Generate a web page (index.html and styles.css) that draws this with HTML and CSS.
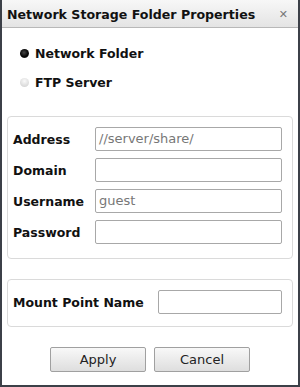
FILE: index.html
```html
<!DOCTYPE html>
<html>
<head>
<meta charset="utf-8">
<link rel="stylesheet" href="styles.css">
</head>
<body>
<div class="dialog">
  <div class="titlebar">
    <span class="title">Network Storage Folder Properties</span>
    <span class="close">&#x2715;</span>
  </div>
  <div class="content">
    <div class="radios">
      <label class="radio"><span class="dot on"></span>Network Folder</label>
      <label class="radio"><span class="dot"></span>FTP Server</label>
    </div>
    <div class="fieldset creds">
      <div class="row"><span class="lbl">Address</span><div class="input ph">//server/share/</div></div>
      <div class="row"><span class="lbl">Domain</span><div class="input"></div></div>
      <div class="row"><span class="lbl">Username</span><div class="input ph">guest</div></div>
      <div class="row"><span class="lbl">Password</span><div class="input"></div></div>
    </div>
    <div class="fieldset mount">
      <div class="row"><span class="lbl wide">Mount Point Name</span><div class="input short"></div></div>
    </div>
    <div class="buttons">
      <button class="btn">Apply</button>
      <button class="btn">Cancel</button>
    </div>
  </div>
</div>
</body>
</html>
```
FILE: styles.css
```css
html, body { margin: 0; padding: 0; background: #fff; }
body { font-family: "DejaVu Sans", Verdana, sans-serif; color: #111; }
.dialog {
  width: 300px; height: 387px; box-sizing: border-box;
  border-left: 2px solid #3c4048; border-right: 2px solid #3c4048; border-bottom: 2px solid #3c4048;
  background: #fff; display: flex; flex-direction: column;
}
.titlebar {
  height: 28px; box-sizing: border-box; display: flex; align-items: center; justify-content: space-between;
  padding: 1px 10px 0 5px;
  background: linear-gradient(#f7f7f7, #e4e4e4);
  border-bottom: 1px solid #b8b8b8;
}
.title { font-weight: bold; font-size: 12.6px; }
.close { font-size: 11px; color: #777; font-weight: bold; }
.content { padding: 0 5px; display: flex; flex-direction: column; }
.radios { display: flex; flex-direction: column; gap: 13px; padding: 17px 0 0 13px; height: 72px; box-sizing: border-box; }
.radio { display: flex; align-items: center; font-weight: bold; font-size: 12.5px; height: 16px; }
.dot { width: 9px; height: 9px; border-radius: 50%; background: radial-gradient(circle at 50% 35%, #fafafa, #d0d0d0 90%); margin-right: 6px; }
.dot.on { background: radial-gradient(circle at 45% 40%, #444, #000 60%, #888 100%); }
.fieldset {
  border: 1px solid #dadada; border-radius: 4px; box-sizing: border-box;
  display: flex; flex-direction: column;
}
.creds { margin-top: 16px; height: 143px; padding: 10px 0 0 5px; gap: 7px; }
.mount { margin-top: 20px; height: 48px; padding: 10px 0 0 5px; }
.row { display: flex; align-items: center; height: 24px; }
.lbl { font-weight: bold; font-size: 12.5px; width: 82px; flex: none; }
.lbl.wide { width: 145px; }
.input {
  width: 187px; height: 24px; box-sizing: border-box; border: 1px solid #a8a8a8; border-radius: 2px;
  font-size: 13px; color: #777; padding: 0 3px; line-height: 22px; background: #fff;
}
.input.short { width: 124px; }
.buttons { display: flex; justify-content: center; gap: 8px; margin-top: 20px; }
.btn {
  width: 96px; height: 25px; border: 1px solid #a0a0a0; border-radius: 2px;
  background: linear-gradient(#f8f8f8, #dedede); font-family: "DejaVu Sans", Verdana, sans-serif;
  font-size: 13px; color: #222; padding: 0;
}
```
